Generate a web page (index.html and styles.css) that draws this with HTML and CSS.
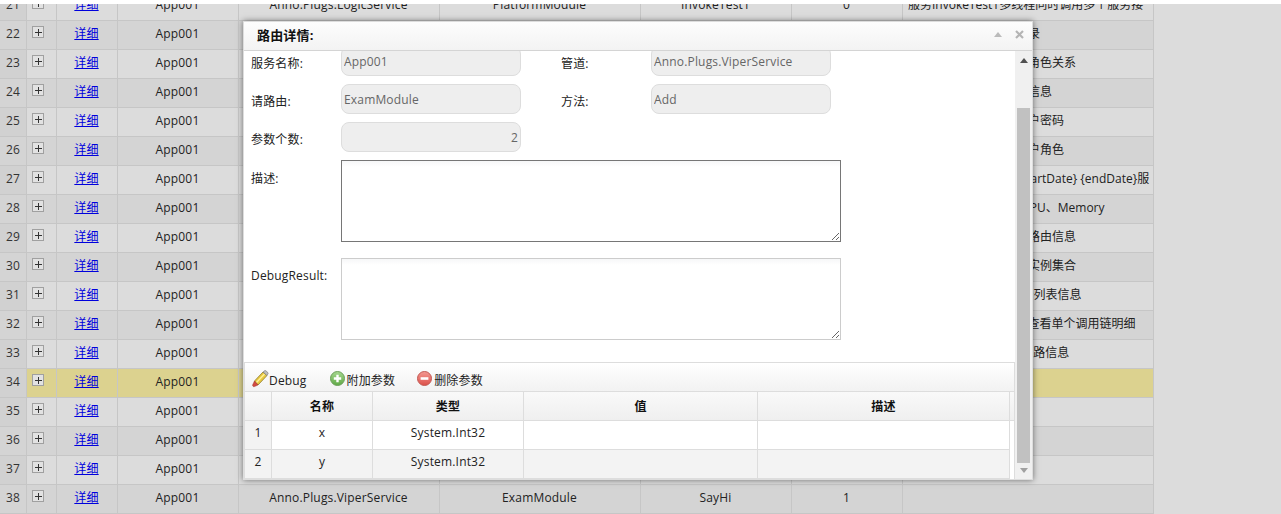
FILE: index.html
```html
<!DOCTYPE html>
<html lang="en">
<head>
  <meta charset="UTF-8">
  <title>路由详情</title>
  <link rel="stylesheet" href="styles.css">
</head>
<body>
  <div class="top-strip"></div>
  <div class="list-wrap">
    <table class="route-list">
      <colgroup>
        <col class="c-num"><col class="c-exp"><col class="c-link"><col class="c-app"><col class="c-svc"><col class="c-mod"><col class="c-method"><col class="c-count"><col class="c-desc">
      </colgroup>
      <tbody>
        <tr><td class="num">21</td><td><span class="exp"></span></td><td><a href="#">详细</a></td><td>App001</td><td>Anno.Plugs.LogicService</td><td>PlatformModule</td><td>InvokeTest1</td><td>0</td><td class="desc">服务InvokeTest1多线程同时调用多个服务接</td></tr>
        <tr><td class="num">22</td><td><span class="exp"></span></td><td><a href="#">详细</a></td><td>App001</td><td>Anno.Plugs.LogicService</td><td>PlatformModule</td><td>GetLog</td><td>0</td><td class="desc">获取当前用户的操作记录</td></tr>
        <tr><td class="num">23</td><td><span class="exp"></span></td><td><a href="#">详细</a></td><td>App001</td><td>Anno.Plugs.LogicService</td><td>PlatformModule</td><td>SaveRole</td><td>2</td><td class="desc">保存当前用户的信息和角色关系</td></tr>
        <tr><td class="num">24</td><td><span class="exp"></span></td><td><a href="#">详细</a></td><td>App001</td><td>Anno.Plugs.LogicService</td><td>PlatformModule</td><td>GetUser</td><td>1</td><td class="desc">获取当前登录用户基本信息</td></tr>
        <tr><td class="num">25</td><td><span class="exp"></span></td><td><a href="#">详细</a></td><td>App001</td><td>Anno.Plugs.LogicService</td><td>PlatformModule</td><td>ChangePwd</td><td>2</td><td class="desc">修改当前已经登录的用户密码</td></tr>
        <tr><td class="num">26</td><td><span class="exp"></span></td><td><a href="#">详细</a></td><td>App001</td><td>Anno.Plugs.LogicService</td><td>PlatformModule</td><td>GetRoles</td><td>1</td><td class="desc">获取当前已经登录的用户角色</td></tr>
        <tr><td class="num">27</td><td><span class="exp"></span></td><td><a href="#">详细</a></td><td>App001</td><td>Anno.Plugs.TraceService</td><td>TraceModule</td><td>GetReport</td><td>2</td><td class="desc">根据时间段查询调用{startDate} {endDate}服</td></tr>
        <tr><td class="num">28</td><td><span class="exp"></span></td><td><a href="#">详细</a></td><td>App001</td><td>Anno.Plugs.TraceService</td><td>TraceModule</td><td>GetInfo</td><td>0</td><td class="desc">获取当前实例的信息&nbsp; CPU、Memory</td></tr>
        <tr><td class="num">29</td><td><span class="exp"></span></td><td><a href="#">详细</a></td><td>App001</td><td>Anno.Plugs.TraceService</td><td>TraceModule</td><td>GetRoutes</td><td>0</td><td class="desc">获取当前的所有服务的路由信息</td></tr>
        <tr><td class="num">30</td><td><span class="exp"></span></td><td><a href="#">详细</a></td><td>App001</td><td>Anno.Plugs.TraceService</td><td>TraceModule</td><td>GetNodes</td><td>0</td><td class="desc">获取当前已注册的服务实例集合</td></tr>
        <tr><td class="num">31</td><td><span class="exp"></span></td><td><a href="#">详细</a></td><td>App001</td><td>Anno.Plugs.TraceService</td><td>TraceModule</td><td>GetServices</td><td>0</td><td class="desc">获取Anno当前全部服务列表信息</td></tr>
        <tr><td class="num">32</td><td><span class="exp"></span></td><td><a href="#">详细</a></td><td>App001</td><td>Anno.Plugs.TraceService</td><td>TraceModule</td><td>GetTrace</td><td>1</td><td class="desc">根据全局唯一 TraceId 查看单个调用链明细</td></tr>
        <tr><td class="num">33</td><td><span class="exp"></span></td><td><a href="#">详细</a></td><td>App001</td><td>Anno.Plugs.TraceService</td><td>TraceModule</td><td>GetLinks</td><td>1</td><td class="desc">根据TraceId查询调用链路信息</td></tr>
        <tr class="picked"><td class="num">34</td><td><span class="exp"></span></td><td><a href="#">详细</a></td><td>App001</td><td>Anno.Plugs.ViperService</td><td>ExamModule</td><td>Add</td><td>2</td><td class="desc"></td></tr>
        <tr><td class="num">35</td><td><span class="exp"></span></td><td><a href="#">详细</a></td><td>App001</td><td>Anno.Plugs.ViperService</td><td>ExamModule</td><td>Dec</td><td>2</td><td class="desc"></td></tr>
        <tr><td class="num">36</td><td><span class="exp"></span></td><td><a href="#">详细</a></td><td>App001</td><td>Anno.Plugs.ViperService</td><td>ExamModule</td><td>Mul</td><td>2</td><td class="desc"></td></tr>
        <tr><td class="num">37</td><td><span class="exp"></span></td><td><a href="#">详细</a></td><td>App001</td><td>Anno.Plugs.ViperService</td><td>ExamModule</td><td>Div</td><td>2</td><td class="desc"></td></tr>
        <tr><td class="num">38</td><td><span class="exp"></span></td><td><a href="#">详细</a></td><td>App001</td><td>Anno.Plugs.ViperService</td><td>ExamModule</td><td>SayHi</td><td>1</td><td class="desc"></td></tr>
      </tbody>
    </table>
  </div>

  <div class="dialog">
    <div class="dialog-head">
      <span class="dialog-title">路由详情:</span>
      <span class="tool-up"></span>
      <svg class="tool-close" width="9" height="9" viewBox="0 0 9 9"><path d="M1 1l7 7M8 1l-7 7" stroke="#b4b4b4" stroke-width="2.2"/></svg>
    </div>
    <div class="dialog-body">
      <div class="dialog-scroll">
        <form class="detail-form">
          <label class="f-label">服务名称:</label>
          <input class="f-input" type="text" value="App001" disabled>
          <span></span>
          <label class="f-label">管道:</label>
          <input class="f-input" type="text" value="Anno.Plugs.ViperService" disabled>

          <label class="f-label">请路由:</label>
          <input class="f-input" type="text" value="ExamModule" disabled>
          <span></span>
          <label class="f-label">方法:</label>
          <input class="f-input" type="text" value="Add" disabled>

          <label class="f-label">参数个数:</label>
          <input class="f-input f-right" type="text" value="2" disabled>
          <span class="f-rest"></span>

          <label class="f-label f-top">描述:</label>
          <textarea class="f-area f-area-dark"></textarea>

          <label class="f-label f-top f-gap">DebugResult:</label>
          <textarea class="f-area f-gap"></textarea>
        </form>

        <div class="param-panel">
          <div class="param-bar">
            <span class="bar-btn bar-first">
              <svg class="ic-pencil" width="18" height="18" viewBox="0 0 18 18">
                <path d="M3.5 11L12 2l4 3.5L7 15z" fill="#e8c93f" stroke="#8f7a2c" stroke-width=".8"/>
                <path d="M5.5 12.5L13.5 4" stroke="#fff09a" stroke-width="1.4"/>
                <path d="M12 2l1.5-1.2c.5-.4 1-.4 1.4 0l2 1.8c.4.4.4.9 0 1.3L16 5.5z" fill="#bdbdbd" stroke="#777" stroke-width=".6"/>
                <path d="M3.5 11L7 15l-3.6 1.6c-1 .4-2.2-.7-1.7-1.8z" fill="#d24a40" stroke="#9c3229" stroke-width=".5"/>
              </svg>
              Debug
            </span>
            <span class="bar-btn">
              <svg width="15" height="15" viewBox="0 0 15 15">
                <defs><linearGradient id="gGreen" x1="0" y1="0" x2="0" y2="1"><stop offset="0" stop-color="#a6d88f"/><stop offset="1" stop-color="#5fa845"/></linearGradient></defs>
                <circle cx="7.5" cy="7.5" r="7" fill="url(#gGreen)" stroke="#6c9f5a"/>
                <path d="M7.5 3.8v7.4M3.8 7.5h7.4" stroke="#fff" stroke-width="2.4"/>
              </svg>
              附加参数
            </span>
            <span class="bar-btn">
              <svg width="15" height="15" viewBox="0 0 15 15">
                <defs><linearGradient id="gRed" x1="0" y1="0" x2="0" y2="1"><stop offset="0" stop-color="#f49a94"/><stop offset="1" stop-color="#dc4f48"/></linearGradient></defs>
                <circle cx="7.5" cy="7.5" r="7" fill="url(#gRed)" stroke="#c25a54"/>
                <path d="M3.6 7.5h7.8" stroke="#fff" stroke-width="2.6"/>
              </svg>
              删除参数
            </span>
          </div>
          <table class="param-grid">
            <colgroup>
              <col class="p-num"><col class="p-name"><col class="p-type"><col class="p-val"><col class="p-desc"><col class="p-fill">
            </colgroup>
            <thead>
              <tr><th></th><th>名称</th><th>类型</th><th>值</th><th>描述</th><th class="no-line"></th></tr>
            </thead>
            <tbody>
              <tr><td class="rn">1</td><td>x</td><td>System.Int32</td><td></td><td></td><td class="blank"></td></tr>
              <tr class="alt"><td class="rn">2</td><td>y</td><td>System.Int32</td><td></td><td></td><td class="blank"></td></tr>
            </tbody>
          </table>
        </div>
      </div>
      <div class="scrollbar">
        <span class="sb-up"></span>
        <span class="sb-thumb"></span>
        <span class="sb-down"></span>
      </div>
    </div>
  </div>
</body>
</html>
```

FILE: styles.css
```css
html, body {
  height: 100%;
  overflow: hidden;
}
body {
  margin: 0;
  background: #dcdcdc;
  font-family: "Open Sans", "Noto Sans CJK SC", sans-serif;
  font-size: 12px;
  letter-spacing: 0.17px;
  color: #222;
}
.top-strip {
  height: 4px;
  background: #fff;
  position: relative;
  z-index: 1;
}
.list-wrap {
  height: 510px;
}
.route-list {
  width: 1154px;
  margin-top: -12px;
  table-layout: fixed;
  border-collapse: separate;
  border-spacing: 0;
}
.c-num { width: 27px; }
.c-exp { width: 30px; }
.c-link { width: 61px; }
.c-app { width: 121px; }
.c-svc { width: 201px; }
.c-mod { width: 201px; }
.c-method { width: 151px; }
.c-count { width: 111px; }
.c-desc { width: 251px; }
.route-list td {
  box-sizing: border-box;
  height: 29px;
  padding: 0 6px 4px 5px;
  text-align: center;
  white-space: nowrap;
  overflow: hidden;
  border-right: 1px solid #c6c6c6;
  border-bottom: 1px solid #c6c6c6;
  background: #dcdcdc;
}
.route-list tr:nth-child(even) td {
  background: #d4d4d4;
}
.route-list td.num {
  padding: 0 0 4px;
  background: #d1d1d1;
  color: #333;
}
.route-list td.desc {
  text-align: left;
  letter-spacing: 0;
}
.route-list tr.picked td {
  background: #dcd28f;
}
.route-list tr.picked td.num {
  background: #d1d1d1;
}
.route-list a {
  color: #0000dd;
}
.exp {
  display: block;
  box-sizing: border-box;
  width: 12px;
  height: 12px;
  margin: -2px 0 0 0;
  border: 1px solid #a0a0a0;
  background:
    linear-gradient(#333, #333) center / 7px 1px no-repeat,
    linear-gradient(#333, #333) center / 1px 7px no-repeat,
    #e2e2e2;
}

/* dialog sits over the list */
.dialog {
  position: absolute;
  left: 243px;
  top: 21px;
  width: 790px;
  height: 459px;
  box-sizing: border-box;
  display: flex;
  flex-direction: column;
  background: #fff;
  border: 1px solid #ddd;
  box-shadow: 0 0 6px rgba(0, 0, 0, 0.5);
}
.dialog-head {
  flex: none;
  box-sizing: border-box;
  height: 29px;
  display: flex;
  align-items: center;
  padding: 0 8px 3px 13px;
  background: linear-gradient(#fdfdfd, #f3f3f3);
  border-bottom: 1px solid #d4d4d4;
}
.dialog-title {
  flex: 1;
  font-size: 13px;
  font-weight: bold;
  color: #111;
}
.tool-up {
  width: 0;
  height: 0;
  margin-right: 13px;
  border: 4px solid transparent;
  border-top: 0;
  border-bottom: 5px solid #bbb;
}
.dialog-body {
  flex: 1;
  min-height: 0;
  display: flex;
}
.dialog-scroll {
  flex: 1;
  min-width: 0;
  overflow: hidden;
}
.scrollbar {
  flex: none;
  width: 17px;
  display: flex;
  flex-direction: column;
  align-items: center;
  background: #f0f0f0;
}
.sb-up {
  width: 0;
  height: 0;
  margin-top: 7px;
  border: 4px solid transparent;
  border-top: 0;
  border-bottom: 5px solid #505050;
}
.sb-thumb {
  width: 13px;
  height: 355px;
  margin-top: 45px;
  background: #c1c1c1;
}
.sb-down {
  width: 0;
  height: 0;
  margin-top: 5px;
  border: 4px solid transparent;
  border-bottom: 0;
  border-top: 5px solid #a0a0a0;
}

.detail-form {
  display: grid;
  grid-template-columns: 90px 180px 40px 90px 180px;
  row-gap: 8px;
  margin-top: -5px;
  padding-left: 7px;
}
.f-label {
  align-self: center;
  padding-top: 4px;
  color: #222;
}
.f-top {
  align-self: start;
  padding-top: 9px;
}
.f-input {
  box-sizing: border-box;
  width: 180px;
  height: 30px;
  padding: 0 2px;
  font: inherit;
  letter-spacing: inherit;
  color: #666;
  background: #eee;
  border: 1px solid #ddd;
  border-radius: 8px;
  outline: none;
}
.f-right {
  text-align: right;
}
.f-rest {
  grid-column: 3 / 6;
}
.f-area {
  grid-column: 2 / 6;
  box-sizing: border-box;
  display: block;
  width: 500px;
  height: 82px;
  margin: 0;
  padding: 2px;
  font: inherit;
  background: linear-gradient(#f6f7f8, #fff 6px);
  border: 1px solid #ccc;
  outline: none;
}
.f-area-dark {
  border-color: #767676;
}
.f-gap {
  margin-top: 8px;
}

.param-panel {
  box-sizing: border-box;
  margin-top: 22px;
  border: 1px solid #ddd;
  border-bottom: 0;
}
.param-bar {
  box-sizing: border-box;
  height: 29px;
  display: flex;
  align-items: center;
  gap: 22px;
  padding: 6px 0 0 6px;
  background: linear-gradient(#fff, #f2f2f2);
  border-bottom: 1px solid #ddd;
}
.bar-btn {
  display: flex;
  align-items: center;
  gap: 1px;
}
.bar-first {
  margin-right: 1px;
}
.bar-btn svg {
  margin-bottom: 3px;
  margin-right: 1px;
}
.bar-btn .ic-pencil {
  margin-right: -1px;
}
.param-grid {
  width: 769px;
  table-layout: fixed;
  border-collapse: separate;
  border-spacing: 0;
}
.p-num { width: 27px; }
.p-name { width: 101px; }
.p-type { width: 151px; }
.p-val { width: 234px; }
.p-desc { width: 252px; }
.p-fill { width: 4px; }
.param-grid th,
.param-grid td {
  box-sizing: border-box;
  height: 29px;
  padding: 0;
  text-align: center;
  border-right: 1px solid #ddd;
  border-bottom: 1px solid #ddd;
}
.param-grid td {
  padding-bottom: 6px;
}
.param-grid th {
  background: linear-gradient(#f9f9f9, #efefef);
  color: #111;
}
.param-grid th.no-line {
  border-right: 0;
}
.param-grid td.rn {
  background: #f3f3f3;
}
.param-grid tr.alt td {
  background: #f3f3f3;
}
.param-grid td.blank,
.param-grid tr.alt td.blank {
  background: #fff;
  border: 0;
}
```
